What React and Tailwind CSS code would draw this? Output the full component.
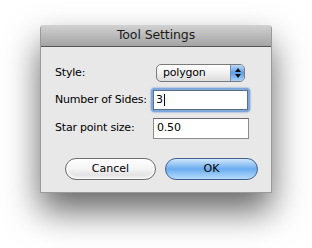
export default function App() {
  const font = { fontFamily: '"DejaVu Sans", Verdana, sans-serif' };

  return (
    <div className="w-[312px] h-[248px] bg-white overflow-hidden pt-[25px] pl-[40px]" style={font}>
      <div className="w-[232px] h-[168px] flex flex-col rounded-t-[4px] bg-[#e8e8e8] border-x border-b border-[#9a9a9a] shadow-[0_18px_34px_rgba(0,0,0,0.6)]">
        {/* title bar */}
        <div className="h-[22px] shrink-0 flex items-center justify-center rounded-t-[4px] bg-gradient-to-b from-[#d2d2d2] to-[#a4a4a4] border-b border-[#565656]">
          <span className="text-[12.5px] text-[#1a1a1a] tracking-[-0.1px]">Tool Settings</span>
        </div>

        {/* fields */}
        <div className="flex flex-col pl-[14px] pt-[17px] text-[11px] tracking-[-0.2px] text-black">
          <div className="flex items-center h-[18px]">
            <span className="w-[101px]">Style:</span>
            <div className="w-[89px] h-[18px] flex rounded-[5px] border border-[#7a7a7a] bg-gradient-to-b from-white via-[#f0f0f0] to-[#dcdcdc] overflow-hidden">
              <span className="flex-1 pl-[6px] leading-[16px]">polygon</span>
              <div className="w-[14px] flex flex-col items-center justify-center gap-[2px] border-l border-[#6f8fb8] bg-gradient-to-b from-[#b9d6f5] via-[#5f9ee6] to-[#a9d0f8]">
                <svg width="6" height="4" viewBox="0 0 6 4"><path d="M3 0L6 4H0z" fill="#111" /></svg>
                <svg width="6" height="4" viewBox="0 0 6 4"><path d="M0 0H6L3 4z" fill="#111" /></svg>
              </div>
            </div>
          </div>

          <div className="flex items-center h-[24px] mt-[6px]">
            <span className="w-[96px]">Number of Sides:</span>
            <div className="w-[99px] h-[24px] p-[2px] rounded-[4px] bg-[#7fa7db] shadow-[0_0_2px_#4d7fc0]">
              <div className="h-full bg-white border border-[#5a6f8a] flex items-center pl-[2px]">
                <span>3</span>
                <span className="w-px h-[12px] bg-black ml-px" />
              </div>
            </div>
          </div>

          <div className="flex items-center h-[21px] mt-[6px]">
            <span className="w-[98px]">Star point size:</span>
            <div className="w-[96px] h-[21px] bg-white border border-[#8c8c8c] border-t-[#6a6a6a] flex items-center pl-[3px]">
              0.50
            </div>
          </div>
        </div>

        {/* buttons */}
        <div className="flex gap-[9px] pl-[24px] mt-[19px] text-[11px] text-black">
          <button className="w-[91px] h-[22px] rounded-full border border-[#6e6e6e] bg-gradient-to-b from-white via-[#f4f4f4] to-[#d8d8d8] shadow-[inset_0_-2px_3px_rgba(255,255,255,0.9)]">
            Cancel
          </button>
          <button className="w-[93px] h-[22px] rounded-full border border-[#41618f] bg-gradient-to-b from-[#d0e6fb] via-[#6aacef] to-[#b6dcfd]">
            OK
          </button>
        </div>
      </div>
    </div>
  );
}
